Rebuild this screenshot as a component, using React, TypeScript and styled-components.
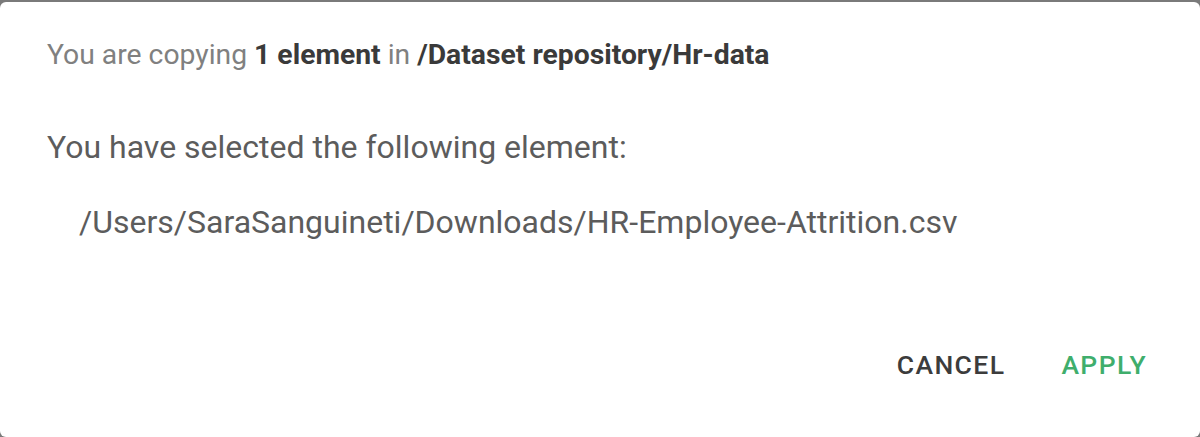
import React from "react";
import styled, { createGlobalStyle } from "styled-components";

const Global = createGlobalStyle`
  html, body { margin: 0; padding: 0; background: #7a7a7a; }
  body { font-family: Roboto, "Liberation Sans", sans-serif; }
`;

const Dialog = styled.div`
  box-sizing: border-box;
  margin-top: 2px;
  width: 1200px;
  height: 435px;
  background: #fff;
  border-radius: 6px;
  padding: 35px 47px 0 47px;
  display: flex;
  flex-direction: column;
`;

const Header = styled.div`
  font-size: 28.3px;
  color: #808080;
  line-height: 36px;
  white-space: nowrap;
  b { color: #3a3a3a; font-weight: 700; }
`;

const Body = styled.div`
  margin-top: 54px;
  font-size: 32px;
  line-height: 40px;
  color: #5c5c5c;
  white-space: nowrap;
`;

const Path = styled.div`
  margin-top: 35px;
  padding-left: 32px;
  font-size: 32px;
  line-height: 40px;
  color: #5c5c5c;
  white-space: nowrap;
`;

const Actions = styled.div`
  margin-top: auto;
  margin-bottom: 56px;
  display: flex;
  justify-content: flex-end;
  gap: 56px;
  padding-right: 6px;
`;

const Button = styled.button<{ $primary?: boolean }>`
  border: none;
  background: none;
  padding: 0;
  font-family: Roboto, "Liberation Sans", sans-serif;
  font-size: 26.5px;
  line-height: 32px;
  letter-spacing: 1.4px;
  font-weight: 500;
  color: ${(p) => (p.$primary ? "#3fae6c" : "#3c3c3c")};
  cursor: pointer;
`;

export default function App() {
  return (
    <>
      <Global />
      <Dialog>
        <Header>
          You are copying <b>1 element</b> in <b>/Dataset repository/Hr-data</b>
        </Header>
        <Body>You have selected the following element:</Body>
        <Path>/Users/SaraSanguineti/Downloads/HR-Employee-Attrition.csv</Path>
        <Actions>
          <Button>CANCEL</Button>
          <Button $primary>APPLY</Button>
        </Actions>
      </Dialog>
    </>
  );
}
